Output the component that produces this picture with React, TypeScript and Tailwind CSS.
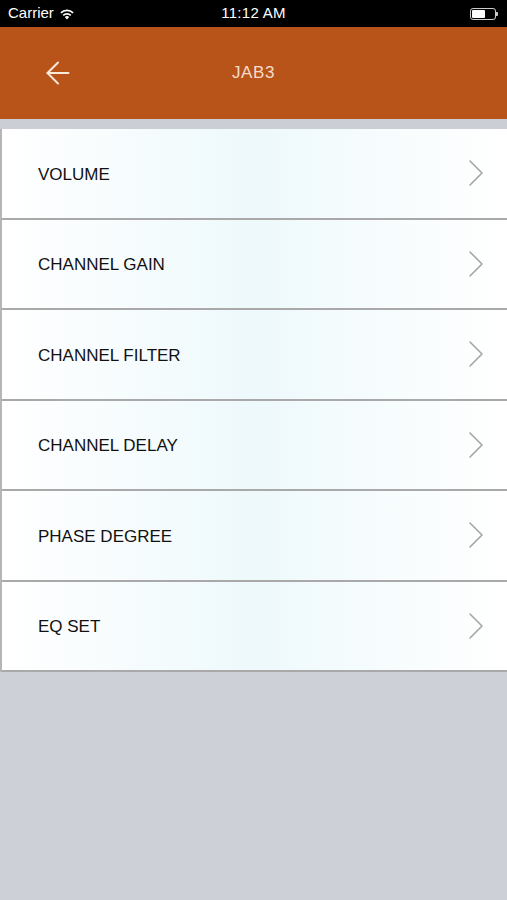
import { ArrowLeft } from "lucide-react";

const items = [
	"VOLUME",
	"CHANNEL GAIN",
	"CHANNEL FILTER",
	"CHANNEL DELAY",
	"PHASE DEGREE",
	"EQ SET",
];

function StatusBar() {
	return (
		<div className="h-[27px] bg-black text-white flex items-center justify-between px-[8px] text-[15px]">
			<div className="flex items-center gap-[5px] w-[120px]">
				<span>Carrier</span>
				<svg width="16" height="12" viewBox="0 0 16 12" fill="white">
					<path d="M8 11.5 L10.2 9 A3.2 3.2 0 0 0 5.8 9 Z" />
					<path d="M3.6 6.8 A6.3 6.3 0 0 1 12.4 6.8 L11.2 8.1 A4.5 4.5 0 0 0 4.8 8.1 Z" />
					<path d="M1.3 4.3 A9.6 9.6 0 0 1 14.7 4.3 L13.5 5.6 A7.8 7.8 0 0 0 2.5 5.6 Z" />
				</svg>
			</div>
			<span className="font-medium tracking-[0.3px]">11:12 AM</span>
			<div className="flex items-center justify-end w-[120px] pr-[1px]">
				<div className="w-[26px] h-[12px] rounded-[3px] border border-white/80 p-[1px] flex">
					<div className="w-[13px] h-full bg-white rounded-[1px]" />
				</div>
				<div className="w-[2px] h-[4px] bg-white/80 rounded-r-[1px]" />
			</div>
		</div>
	);
}

function Chevron() {
	return (
		<svg width="16" height="28" viewBox="0 0 16 28" fill="none" className="mr-[23px]">
			<polyline
				points="2,2 14,14 2,26"
				stroke="#a5a5a5"
				strokeWidth="1.6"
				strokeLinecap="round"
				strokeLinejoin="round"
			/>
		</svg>
	);
}

export default function App() {
	return (
		<div
			className="w-[507px] h-[900px] bg-[#cdd0d7] flex flex-col overflow-hidden"
			style={{ fontFamily: '"Liberation Sans", Arial, sans-serif' }}
		>
			<StatusBar />
			<div className="h-[92px] bg-[#b8541a] relative flex items-center justify-center">
				<ArrowLeft
					className="absolute left-[40px] top-[28px] text-[#fbe9dc]"
					size={36}
					strokeWidth={1.3}
				/>
				<span className="text-[#f5dccb] text-[17px] tracking-[0.6px]">JAB3</span>
			</div>
			<div className="h-[10px] bg-[#cbced5]" />
			<ul className="border-l-2 border-[#b5b5b5]">
				{items.map((item) => (
					<li
						key={item}
						className="h-[90.5px] flex items-center justify-between border-b-2 border-[#a9a9a9] bg-gradient-to-r from-white via-[#eef9fc] to-white"
					>
						<span className="ml-[36px] mt-[2px] text-[17px] text-[#111]">{item}</span>
						<Chevron />
					</li>
				))}
			</ul>
		</div>
	);
}
